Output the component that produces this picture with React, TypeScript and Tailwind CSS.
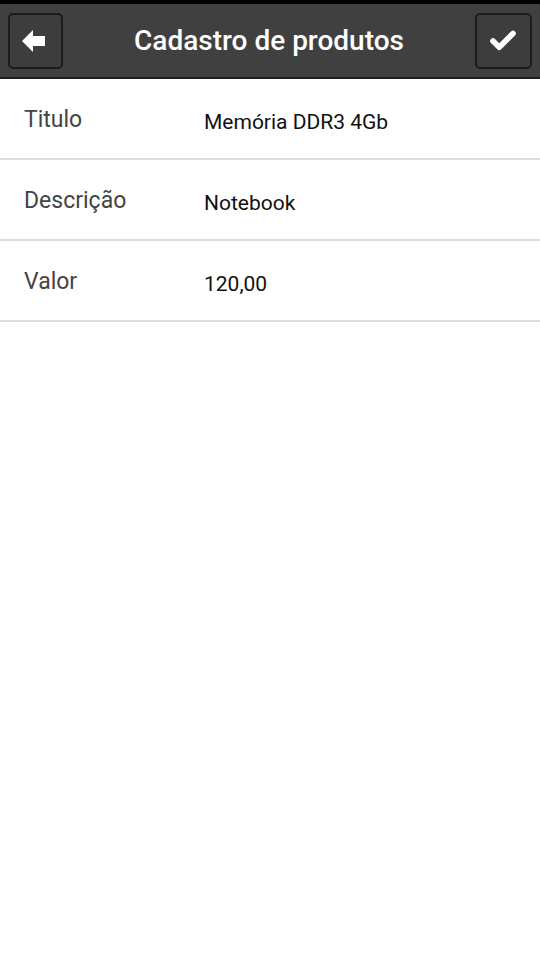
import { Check } from "lucide-react";

const fields = [
  { label: "Titulo", value: "Memória DDR3 4Gb" },
  { label: "Descrição", value: "Notebook" },
  { label: "Valor", value: "120,00" },
];

export default function App() {
  return (
    <div className="w-[540px] h-[960px] bg-white font-['Roboto',sans-serif]">
      <header className="h-[79px] bg-[#404040] border-t-4 border-t-black border-b-2 border-b-[#1e1e1e] flex items-center justify-between px-2">
        <button className="w-[55px] h-[56px] rounded-[5px] border-2 border-[#1c1c1c] bg-[#3d3d3d] flex items-center justify-center">
          {/* block arrow */}
          <svg width="24" height="24" viewBox="0 0 24 24" className="-ml-1">
            <polygon points="0,12 11,1 11,7 23,7 23,17 11,17 11,23" fill="#fff" />
          </svg>
        </button>
        <h1 className="text-white text-[28px] font-medium">Cadastro de produtos</h1>
        <button className="w-[57px] h-[56px] rounded-[5px] border-2 border-[#1c1c1c] bg-[#3d3d3d] flex items-center justify-center">
          <Check size={30} strokeWidth={4.5} className="text-white" />
        </button>
      </header>
      <div>
        {fields.map((f) => (
          <div
            key={f.label}
            className="h-[81px] flex items-center border-b-2 border-[#dcdcdc] pt-2"
          >
            <span className="w-[204px] pl-6 text-[23px] text-[#444] -mt-1">
              {f.label}
            </span>
            <span className="text-[21px] text-[#111]">{f.value}</span>
          </div>
        ))}
      </div>
    </div>
  );
}
